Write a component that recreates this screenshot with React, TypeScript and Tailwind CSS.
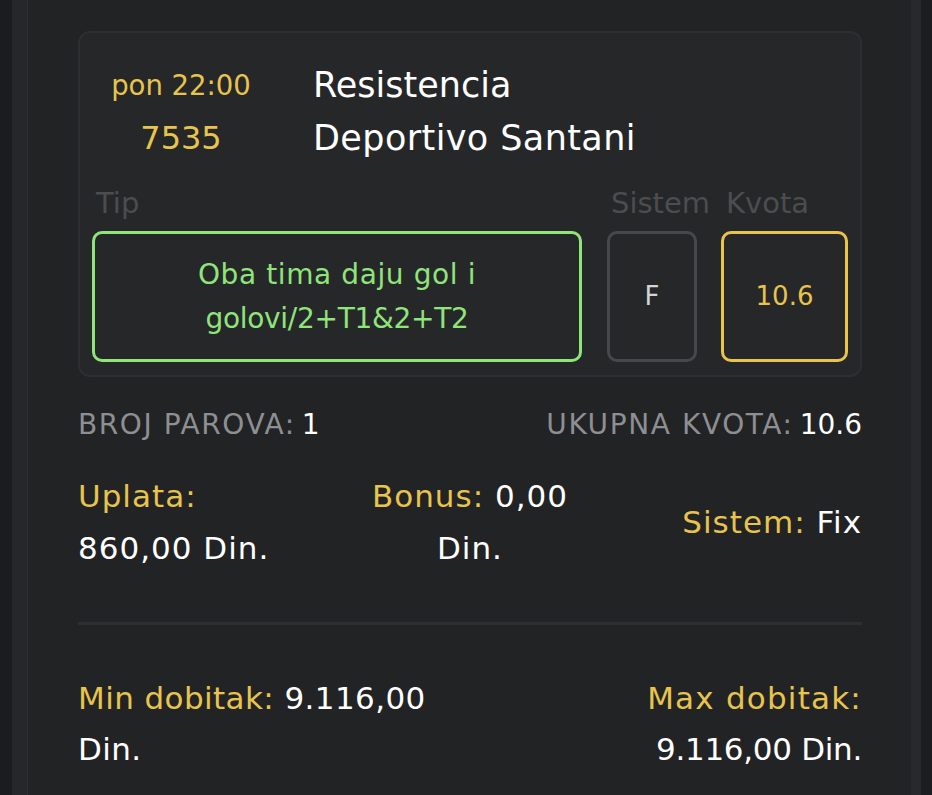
import React from "react";

const font = { fontFamily: "'DejaVu Sans', 'Open Sans', sans-serif" };

export default function App() {
  return (
    <div className="flex h-[795px] w-[932px] overflow-hidden bg-[#1c1d20]" style={font}>
      <div className="w-[12px] shrink-0 bg-[#1b1c1f]" />
      <div className="w-[16px] shrink-0 border-r border-[#2c2f31] bg-[#25272a]" />
      <div className="flex w-[883px] shrink-0 flex-col bg-[#222325] pl-[50px] pr-[49px] pt-[31px]">
        {/* Card */}
        <div className="rounded-[12px] border-2 border-[#2c2e31] bg-[#262729] px-[12px] pb-[13px] pt-[26px]">
          <div className="flex">
            <div className="w-[178px] text-center">
              <div className="h-[53px] text-[27.5px] leading-[53px] text-[#e8c44c]">pon 22:00</div>
              <div className="h-[53px] text-[32px] leading-[53px] text-[#e8c44c]">7535</div>
            </div>
            <div className="ml-[43px]">
              <div className="h-[53px] text-[35px] leading-[53px] text-white">Resistencia</div>
              <div className="h-[53px] text-[35px] leading-[53px] tracking-[0.4px] text-white">Deportivo Santani</div>
            </div>
          </div>
          <div className="mt-[21px] flex gap-[25px]">
            <div className="flex w-[490px] flex-col">
              <div className="h-[34px] pl-[4px] text-[29px] leading-[34px] text-[#4b4d50]">Tip</div>
              <div className="mt-[11px] flex h-[131px] items-center justify-center rounded-[10px] border-[3px] border-[#8fe47a] px-4 text-center text-[28px] leading-[44px] text-[#8fe47a]">
                <div>
                  <span className="tracking-[0.6px]">Oba tima daju gol i</span>
                  <br />
                  <span className="tracking-[-0.3px]">golovi/2+T1&amp;2+T2</span>
                </div>
              </div>
            </div>
            <div className="flex w-[90px] flex-col">
              <div className="h-[34px] whitespace-nowrap pl-[4px] text-[29px] leading-[34px] text-[#4b4d50]">Sistem</div>
              <div className="mt-[11px] flex h-[131px] items-center justify-center rounded-[10px] border-[3px] border-[#47484b] text-[26px] text-[#d4d4d6]">
                F
              </div>
            </div>
            <div className="ml-[-1px] flex w-[127px] flex-col">
              <div className="h-[34px] whitespace-nowrap pl-[5px] text-[29px] leading-[34px] text-[#4b4d50]">Kvota</div>
              <div className="mt-[11px] flex h-[131px] items-center justify-center rounded-[10px] border-[3px] border-[#e8c44c] text-[26px] text-[#e8c44c]">
                10.6
              </div>
            </div>
          </div>
        </div>

        {/* Totals */}
        <div className="mt-[31px] flex h-[34px] items-center justify-between text-[28px] leading-[34px] tracking-[1.6px]">
          <div>
            <span className="text-[#8e8f92]">BROJ PAROVA:</span>
            <span className="ml-[6px] text-white">1</span>
          </div>
          <div>
            <span className="text-[#8e8f92]">UKUPNA KVOTA:</span>
            <span className="ml-[6px] tracking-[0px] text-white">10.6</span>
          </div>
        </div>

        <div className="mt-[28px] grid grid-cols-3 text-[31px] leading-[52px] tracking-[1px]">
          <div className="text-left">
            <div className="text-[#e8c44c]">Uplata:</div>
            <div className="text-white">860,00 Din.</div>
          </div>
          <div className="text-center">
            <div className="whitespace-nowrap">
              <span className="text-[#e8c44c]">Bonus: </span>
              <span className="text-white">0,00</span>
            </div>
            <div className="text-white">Din.</div>
          </div>
          <div className="flex items-center justify-end text-right">
            <div className="whitespace-nowrap">
              <span className="text-[#e8c44c]">Sistem: </span>
              <span className="text-white">Fix</span>
            </div>
          </div>
        </div>

        <div className="mt-[48px] h-[3px] bg-[#2d2f32]" />

        <div className="mt-[48px] flex justify-between text-[31px] leading-[51px] tracking-[0.4px]">
          <div className="text-left">
            <div>
              <span className="text-[#e8c44c]">Min dobitak: </span>
              <span className="text-white">9.116,00</span>
            </div>
            <div className="text-white">Din.</div>
          </div>
          <div className="text-right">
            <div className="tracking-[1.2px] text-[#e8c44c]">Max dobitak:</div>
            <div className="tracking-[-0.3px] text-white">9.116,00 Din.</div>
          </div>
        </div>
      </div>
      <div className="w-[10px] shrink-0 bg-[#28292c]" />
      <div className="flex-1 bg-[#1c1d20]" />
    </div>
  );
}
